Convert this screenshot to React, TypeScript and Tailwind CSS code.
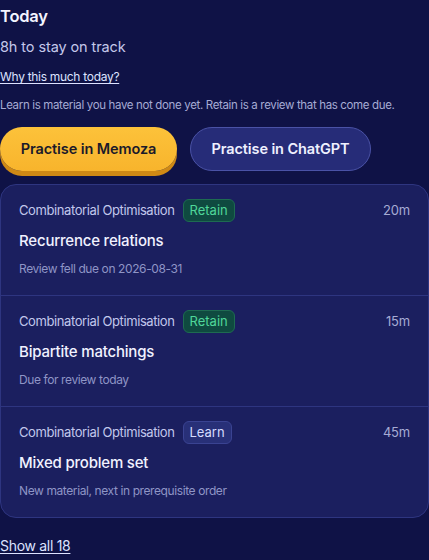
import React from 'react';

type Task = {
  course: string;
  kind: 'Retain' | 'Learn';
  minutes: string;
  title: string;
  note: string;
};

const TASKS: Task[] = [
  { course: 'Combinatorial Optimisation', kind: 'Retain', minutes: '20m', title: 'Recurrence relations', note: 'Review fell due on 2026-08-31' },
  { course: 'Combinatorial Optimisation', kind: 'Retain', minutes: '15m', title: 'Bipartite matchings', note: 'Due for review today' },
  { course: 'Combinatorial Optimisation', kind: 'Learn', minutes: '45m', title: 'Mixed problem set', note: 'New material, next in prerequisite order' },
];

function Badge({ kind }: { kind: Task['kind'] }) {
  if (kind === 'Retain') {
    return (
      <span className="rounded-md border border-[#1e6b51] bg-[#0f4a40] px-[6px] py-[2px] text-[13px] leading-[17px] text-[#4fd79a]">
        Retain
      </span>
    );
  }
  return (
    <span className="rounded-md border border-[#3a4392] bg-[#283078] px-[6px] py-[2px] text-[13px] leading-[17px] text-[#d6dcff]">
      Learn
    </span>
  );
}

export default function App() {
  return (
    <div
      className="min-h-screen bg-[#0f1246] pt-[5px] text-white"
      style={{ fontFamily: 'Inter, "Noto Sans", sans-serif' }}
    >
      <h1 className="text-[16.5px] font-semibold leading-[22px] tracking-[-0.2px] text-[#f3f4ff]">Today</h1>
      <p className="mt-[10px] text-[14.5px] leading-[20px] tracking-[-0.1px] text-[#c4c8ea]">8h to stay on track</p>
      <a href="#" className="mt-[12px] block text-[12px] leading-[16px] tracking-[-0.3px] text-[#dde2ff] underline underline-offset-2">
        Why this much today?
      </a>
      <p className="mt-[12px] text-[11.5px] leading-[16px] tracking-[-0.35px] text-[#a6abd4]">
        Learn is material you have not done yet. Retain is a review that has come due.
      </p>

      <div className="mt-[14px] flex items-start gap-[13px]">
        <button className="h-[44px] w-[177px] rounded-full bg-gradient-to-b from-[#fcc23a] to-[#f8b42c] text-[14.5px] font-semibold tracking-[-0.1px] text-[#1b1a2a] shadow-[0_5px_0_#cf8915]">
          Practise in Memoza
        </button>
        <button className="h-[44px] w-[181px] rounded-full border border-[#4a52a6] bg-[#262c78] text-[14.5px] font-semibold tracking-[-0.1px] text-[#eef0ff]">
          Practise in ChatGPT
        </button>
      </div>

      <div className="mt-[13px] overflow-hidden rounded-2xl border border-[#2e3580] bg-[#1b1f5f]">
        {TASKS.map((t, i) => (
          <div key={i} className={`px-[18px] pt-[14px] pb-[18px] ${i > 0 ? 'border-t border-[#2e3580]' : ''}`}>
            <div className="flex items-center gap-[8px]">
              <span className="text-[13px] tracking-[-0.4px] text-[#c2c7ec]">{t.course}</span>
              <Badge kind={t.kind} />
              <span className="ml-auto text-[13px] tracking-[-0.2px] text-[#a6abd4]">{t.minutes}</span>
            </div>
            <div className="mt-[8px] text-[15px] font-medium leading-[22px] tracking-[-0.2px] text-[#f1f2ff]">{t.title}</div>
            <div className="mt-[9px] text-[12px] leading-[16px] tracking-[-0.4px] text-[#8f95c6]">{t.note}</div>
          </div>
        ))}
      </div>

      <a href="#" className="mt-[18px] inline-block text-[14px] leading-[20px] tracking-[-0.3px] text-[#dde2ff] underline underline-offset-2">
        Show all 18
      </a>
    </div>
  );
}
